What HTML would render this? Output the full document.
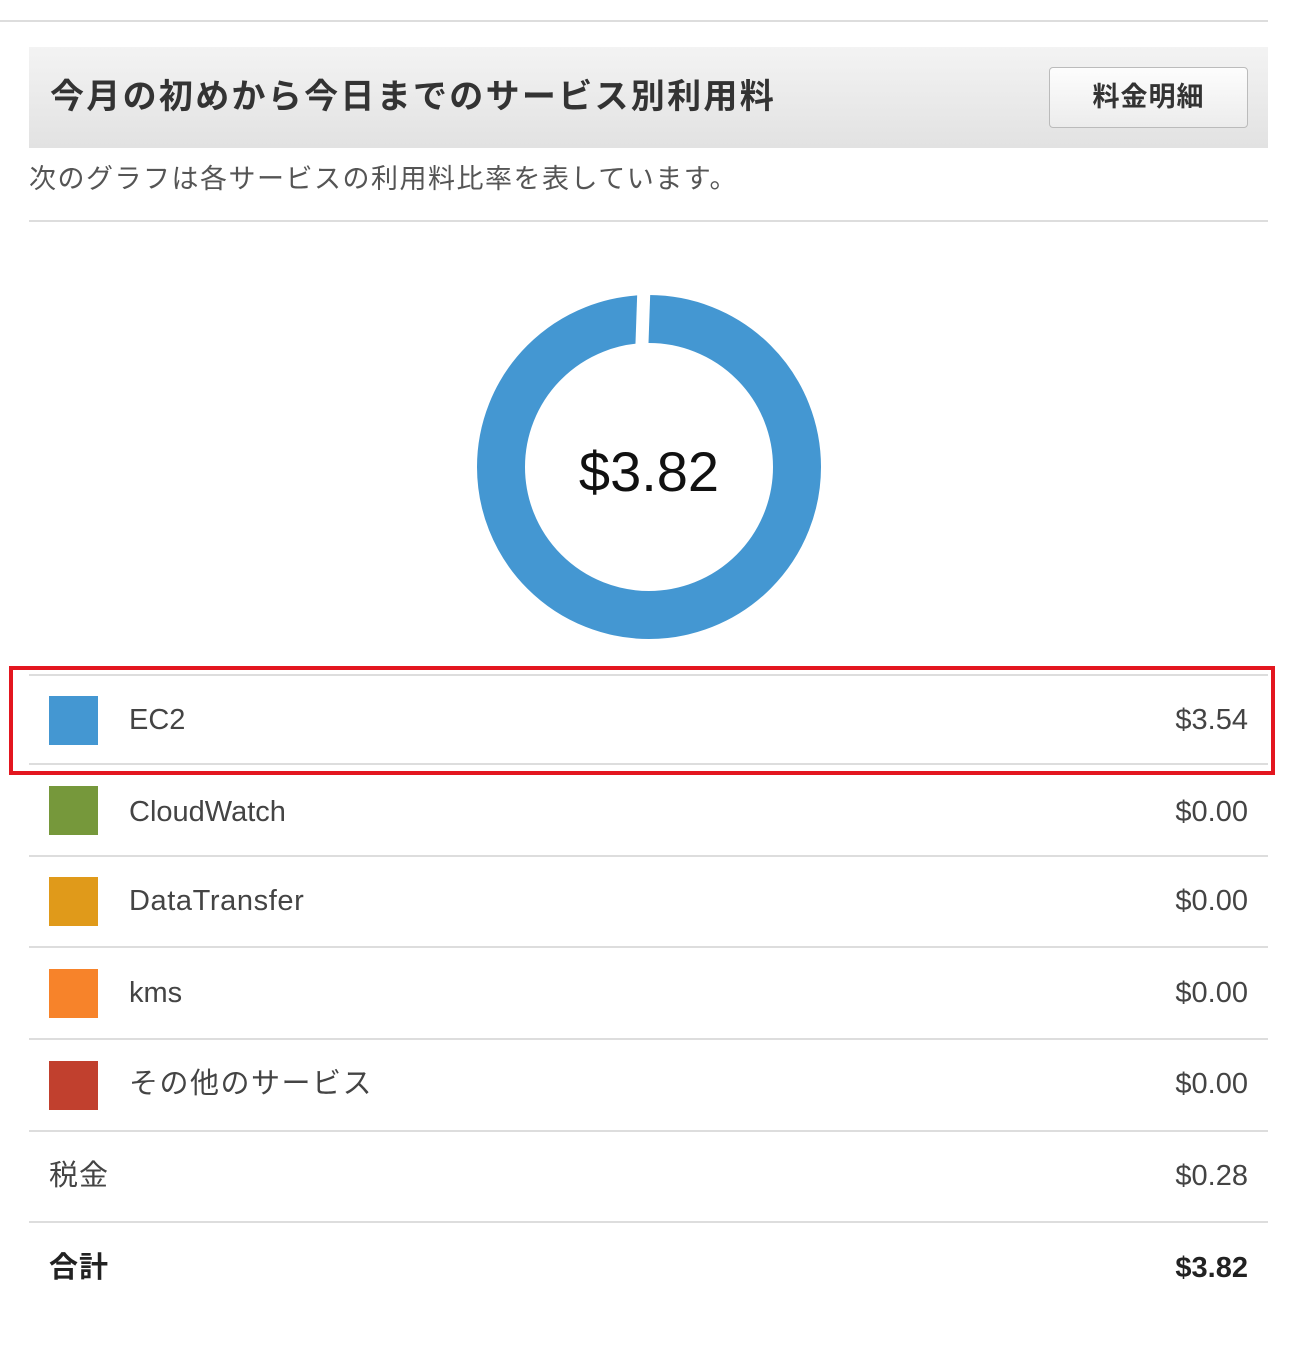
<!DOCTYPE html>
<html><head><meta charset="utf-8"><style>
body{margin:0;width:1300px;height:1369px;background:#fff;position:relative;font-family:"Liberation Sans","Noto Sans CJK JP",sans-serif;overflow:hidden}
.a{position:absolute}
.hl{position:absolute;left:29px;width:1239px;height:2px;background:#ddd}
.sq{position:absolute;left:49px;width:49px;height:49px}
.lb{position:absolute;left:129px;font-size:29px;color:#444;line-height:34px}
.pr{position:absolute;right:52px;font-size:29px;color:#444;line-height:34px}
</style></head><body>
<div class="a" style="left:0;top:20px;width:1268px;height:2px;background:#ddd"></div>
<div class="a" style="left:29px;top:47px;width:1239px;height:101px;background:linear-gradient(#f3f3f3,#e2e2e2)"></div>
<div class="a" style="left:50px;top:77px;font-size:34px;letter-spacing:2.3px;font-weight:bold;color:#333;line-height:40px">今月の初めから今日までのサービス別利用料</div>
<div class="a" style="left:1049px;top:67px;width:197px;height:59px;border:1px solid #bbb;border-radius:4px;background:linear-gradient(#fdfdfd,#ececec);font-size:27px;letter-spacing:1px;font-weight:bold;color:#333;text-align:center;line-height:59px">料金明細</div>
<div class="a" style="left:29px;top:162px;font-size:27px;letter-spacing:1.5px;color:#555;line-height:34px">次のグラフは各サービスの利用料比率を表しています。</div>
<div class="hl" style="top:220px"></div>
<svg class="a" style="left:0;top:0" width="1300" height="700">
<circle cx="649" cy="467" r="148" fill="none" stroke="#4497d2" stroke-width="48"/>
<rect x="637" y="280" width="13" height="70" fill="#fff" transform="rotate(2 643 300)"/>
<text x="649" y="491" font-size="56" text-anchor="middle" fill="#111" font-family="Liberation Sans">$3.82</text>
</svg>
<div class="hl" style="top:674px"></div>
<div class="hl" style="top:763px"></div>
<div class="hl" style="top:855px"></div>
<div class="hl" style="top:946px"></div>
<div class="hl" style="top:1038px"></div>
<div class="hl" style="top:1130px"></div>
<div class="hl" style="top:1221px"></div>
<div class="sq" style="top:696px;background:#4497d2"></div><div class="lb" style="top:703px">EC2</div><div class="pr" style="top:703px">$3.54</div>
<div class="sq" style="top:786px;background:#76983b"></div><div class="lb" style="top:795px">CloudWatch</div><div class="pr" style="top:795px">$0.00</div>
<div class="sq" style="top:877px;background:#e09a1a"></div><div class="lb" style="top:884px;letter-spacing:0.6px">DataTransfer</div><div class="pr" style="top:884px">$0.00</div>
<div class="sq" style="top:969px;background:#f7832a"></div><div class="lb" style="top:976px">kms</div><div class="pr" style="top:976px">$0.00</div>
<div class="sq" style="top:1061px;background:#c1402e"></div><div class="lb" style="top:1067px;letter-spacing:1.5px">その他のサービス</div><div class="pr" style="top:1067px">$0.00</div>
<div class="lb" style="left:49px;top:1159px;letter-spacing:1px">税金</div><div class="pr" style="top:1159px">$0.28</div>
<div class="lb" style="left:49px;top:1251px;font-weight:bold;color:#222;letter-spacing:1px">合計</div><div class="pr" style="top:1251px;font-weight:bold;color:#222">$3.82</div>
<div class="a" style="left:9px;top:666px;width:1258px;height:101px;border:4px solid #e3161f"></div>
</body></html>
